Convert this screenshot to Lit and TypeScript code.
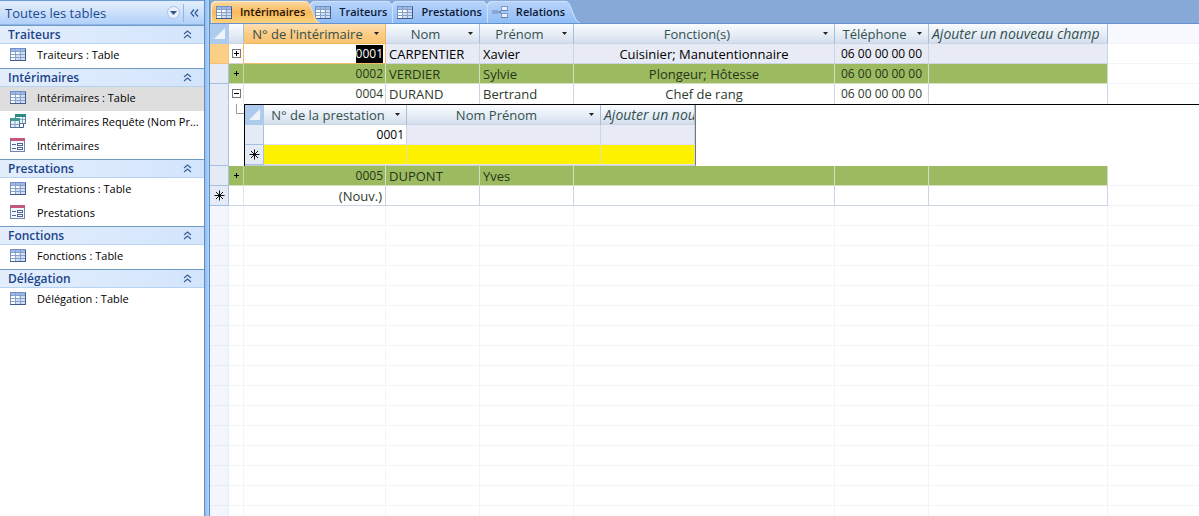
import { LitElement, html, svg, css, nothing } from "lit";
import { customElement, state } from "lit/decorators.js";
import { classMap } from "lit/directives/class-map.js";

type IconName = "table" | "query" | "form" | "relations";

const tableIcon = html`<svg class="icon" width="16" height="13" viewBox="0 0 16 13" aria-hidden="true">
  <rect x="0.5" y="0.5" width="15" height="12" fill="#fdfeff" stroke="#7390c4" />
  <rect x="1" y="1" width="14" height="2" fill="#9db9ea" />
  <path d="M5 7H9V10H15V12H5Z M9 4H15V10H9Z" fill="#cfdff6" />
  <path d="M1 3.5H15M1 6.5H15M1 9.5H15M5.5 1V12M10.5 1V12" stroke="#8ba2c8" fill="none" />
  <path d="M0 12.5H16M15.5 1V13" stroke="#425a8e" fill="none" />
</svg>`;

const queryIcon = html`<svg class="icon" width="16" height="15" viewBox="0 0 16 15" aria-hidden="true">
  <rect x="5.5" y="0.5" width="10" height="9" fill="#eef5fa" stroke="#55809b" />
  <rect x="5" y="0" width="11" height="3" fill="#2f8a86" />
  <path d="M6 5.5H15M12.5 3V9" stroke="#8aa6c0" />
  <rect x="0.5" y="4.5" width="9" height="9" fill="#e3ecf8" stroke="#55709b" />
  <rect x="0" y="4" width="10" height="3" fill="#3f9a94" />
  <path d="M1 10.5H9M5 7V13" stroke="#8aa6c0" />
  <path d="M10 13.5H13.5V10" stroke="#3b5a8c" fill="none" />
</svg>`;

const formIcon = html`<svg class="icon" width="15" height="14" viewBox="0 0 15 14" aria-hidden="true">
  <rect x="0.5" y="0.5" width="14" height="13" fill="#f3f6fc" stroke="#7186ae" />
  <rect x="0" y="0" width="15" height="3" fill="#c2577f" />
  <path d="M2 6.5H6M2 10.5H6" stroke="#4f6593" />
  <rect x="7.5" y="5.5" width="5" height="2" fill="#fff" stroke="#4f6593" />
  <rect x="7.5" y="9.5" width="5" height="2" fill="#fff" stroke="#4f6593" />
</svg>`;

const relationsIcon = html`<svg class="icon" width="16" height="14" viewBox="0 0 16 14" aria-hidden="true">
  <path d="M5 7H8M8 7L11 3.5M8 7L11 11" stroke="#5f7294" fill="none" />
  <rect x="0.5" y="5.5" width="5" height="3" fill="#8ba6d2" stroke="#8ba6d2" />
  <rect x="9.5" y="1.5" width="6" height="4" fill="#e6eefb" stroke="#8199c4" />
  <rect x="9.5" y="8.5" width="6" height="4" fill="#e6eefb" stroke="#8199c4" />
  <path d="M9 5.5H16M9 12.5H16" stroke="#5f7fb8" />
</svg>`;

const icons: Record<IconName, unknown> = {
  table: tableIcon,
  query: queryIcon,
  form: formIcon,
  relations: relationsIcon,
};

const newRecord = html`<svg class="glyph" width="11" height="11" viewBox="0 0 11 11" role="img" aria-label="Nouvel enregistrement">
  <path d="M5.5 0.5V10.5M0.5 5.5H10.5M2 2L9 9M9 2L2 9" stroke="#111" fill="none" />
</svg>`;

const corner = html`<svg class="glyph" width="11" height="11" viewBox="0 0 11 11" aria-hidden="true">
  <path d="M11 0V11H0Z" fill="#eef3fa" />
</svg>`;

const arrow = (label: string) => html`<button class="arrow" aria-label="Filtrer ${label}">
  <svg width="5" height="3" viewBox="0 0 5 3" aria-hidden="true"><path d="M0 0H5L2.5 3Z" fill="#222" /></svg>
</button>`;

interface Group {
  title: string;
  items: { icon: IconName; text: string; selected?: boolean }[];
}

const groups: Group[] = [
  { title: "Traiteurs", items: [{ icon: "table", text: "Traiteurs : Table" }] },
  {
    title: "Intérimaires",
    items: [
      { icon: "table", text: "Intérimaires : Table", selected: true },
      { icon: "query", text: "Intérimaires Requête (Nom Pr..." },
      { icon: "form", text: "Intérimaires" },
    ],
  },
  {
    title: "Prestations",
    items: [
      { icon: "table", text: "Prestations : Table" },
      { icon: "form", text: "Prestations" },
    ],
  },
  { title: "Fonctions", items: [{ icon: "table", text: "Fonctions : Table" }] },
  { title: "Délégation", items: [{ icon: "table", text: "Délégation : Table" }] },
];

@customElement("nav-pane")
export class NavPane extends LitElement {
  @state() private closed = new Set<string>();

  static styles = css`
    :host {
      display: block;
      background: #fff;
      font: 12px/18px "Open Sans", sans-serif;
      color: #000;
    }
    header {
      display: flex;
      align-items: center;
      box-sizing: border-box;
      height: 25px;
      padding-left: 5px;
      border-top: 1px solid #6b9bd8;
      border-bottom: 1px solid #8fb4e6;
      background: linear-gradient(#e2eefd, #cfe2fb 45%, #b0d0fa);
    }
    h1 {
      flex: 1;
      margin: 0;
      font-size: 13px;
      font-weight: 400;
      color: #21498f;
    }
    button {
      border: 0;
      padding: 0;
      background: none;
      font: inherit;
      color: inherit;
    }
    .menu,
    .collapse {
      display: flex;
      align-items: center;
      justify-content: center;
      height: 18px;
      width: 20px;
    }
    .menu {
      border-right: 1px solid #93b5e2;
    }
    h2 {
      margin: 0;
      font-size: 12px;
    }
    .group {
      display: flex;
      align-items: center;
      justify-content: space-between;
      box-sizing: border-box;
      width: 100%;
      height: 19px;
      padding: 0 12px 0 8px;
      border-top: 1px solid #6f9bc4;
      border-bottom: 1px solid #b7d3f3;
      background: linear-gradient(90deg, #e3eefd, #d3e5fc);
      font-weight: 600;
      color: #1b4488;
    }
    ul {
      margin: 0;
      padding: 0;
      list-style: none;
    }
    a {
      display: flex;
      align-items: center;
      box-sizing: border-box;
      height: 24px;
      padding: 0 0 2px 10px;
      color: inherit;
      text-decoration: none;
      white-space: nowrap;
      font-size: 11px;
    }
    .selected {
      background: #dedede;
    }
    .slot {
      display: flex;
      width: 27px;
      padding-bottom: 2px;
    }
  `;

  private toggle(title: string) {
    const next = new Set(this.closed);
    next.has(title) ? next.delete(title) : next.add(title);
    this.closed = next;
  }

  render() {
    return html`
      <header>
        <h1>Toutes les tables</h1>
        <button class="menu" aria-label="Choisir une catégorie">
          <svg width="13" height="13" viewBox="0 0 13 13" aria-hidden="true">
            <circle cx="6.5" cy="6.5" r="6" fill="#e6effb" stroke="#a9c2e4" />
            <path d="M3 5H10L6.5 9Z" fill="#33548c" />
          </svg>
        </button>
        <button class="collapse" aria-label="Réduire le volet">
          <svg width="9" height="8" viewBox="0 0 9 8" aria-hidden="true">
            <path d="M4 0.5L1 4L4 7.5M8 0.5L5 4L8 7.5" fill="none" stroke="#2e579d" stroke-width="1.2" />
          </svg>
        </button>
      </header>
      <nav>
        ${groups.map(
          (g) => html`
            <h2>
              <button class="group" @click=${() => this.toggle(g.title)}>
                ${g.title}
                <svg width="9" height="9" viewBox="0 0 9 9" aria-hidden="true">
                  <path d="M1 4L4.5 1L8 4M1 8L4.5 5L8 8" fill="none" stroke="#3c5f99" stroke-width="1.2" />
                </svg>
              </button>
            </h2>
            ${this.closed.has(g.title)
              ? nothing
              : html`<ul>
                  ${g.items.map(
                    (i) => html`<li>
                      <a href="#" class=${classMap({ selected: !!i.selected })}
                        ><span class="slot">${icons[i.icon]}</span>${i.text}</a
                      >
                    </li>`
                  )}
                </ul>`}
          `
        )}
      </nav>
    `;
  }
}

const tabs: { icon: IconName; text: string }[] = [
  { icon: "table", text: "Intérimaires" },
  { icon: "table", text: "Traiteurs" },
  { icon: "table", text: "Prestations" },
  { icon: "relations", text: "Relations" },
];

@customElement("document-tabs")
export class DocumentTabs extends LitElement {
  @state() private active = 0;

  static styles = css`
    :host {
      display: flex;
      box-sizing: border-box;
      height: 24px;
      padding: 1px 0 0 1px;
      background: #87a9d7;
      border-bottom: 1px solid #6592cc;
      font: 600 11px/22px "Open Sans", sans-serif;
      color: #0c1a38;
    }
    button {
      display: flex;
      position: relative;
      margin: 0 -10px 0 0;
      border: 0;
      padding: 0;
      background: none;
      font: inherit;
      color: inherit;
    }
    .body {
      display: flex;
      align-items: center;
      gap: 8px;
      height: 22px;
      padding-left: 5px;
      border-radius: 5px 0 0 0;
      background: linear-gradient(#b9d4fa, #a4c8f8 50%, #8fbdf6);
      box-shadow: inset 1px 1px #cfe1fa;
    }
    .cap {
      display: block;
    }
    .active {
      z-index: 1;
      color: #1f1403;
    }
    .active .body {
      background: linear-gradient(#fcdca6, #f9b95c 50%, #fcd27b);
      box-shadow: inset 1px 1px #fde9c4;
    }
  `;

  render() {
    return tabs.map((t, n) => {
      const on = n === this.active;
      const stops = on ? ["#fcdca6", "#f9b95c", "#fcd27b"] : ["#b9d4fa", "#a4c8f8", "#8fbdf6"];
      return html`<button class=${classMap({ active: on })} @click=${() => (this.active = n)}>
        <span class="body">${icons[t.icon]}${t.text}</span>
        <svg class="cap" width="15" height="22" viewBox="0 0 15 22" aria-hidden="true">
          <defs>
            ${svg`<linearGradient id=${"cap" + n} x1="0" y1="0" x2="0" y2="1">
              <stop offset="0" stop-color=${stops[0]} /><stop offset="0.5" stop-color=${stops[1]} /><stop offset="1" stop-color=${stops[2]} />
            </linearGradient>`}
          </defs>
          <path d="M0 0C3 0 4 2 6 7L10 17Q12 22 15 22H0Z" fill=${`url(#cap${n})`} />
          <path d="M0 0.5C3 0.5 4 2 6 7L10 17Q12 21.5 15 22" fill="none" stroke=${on ? "#fbe3b5" : "#d3e4fa"} />
        </svg>
      </button>`;
    });
  }
}

interface Row {
  id: string;
  nom: string;
  prenom: string;
  fonctions: string;
  tel: string;
  tone?: "current" | "green";
  open?: boolean;
}

const rows: Row[] = [
  { id: "0001", nom: "CARPENTIER", prenom: "Xavier", fonctions: "Cuisinier; Manutentionnaire", tel: "06 00 00 00 00", tone: "current" },
  { id: "0002", nom: "VERDIER", prenom: "Sylvie", fonctions: "Plongeur; Hôtesse", tel: "06 00 00 00 00", tone: "green" },
  { id: "0004", nom: "DURAND", prenom: "Bertrand", fonctions: "Chef de rang", tel: "06 00 00 00 00", open: true },
  { id: "0005", nom: "DUPONT", prenom: "Yves", fonctions: "", tel: "", tone: "green" },
];

@customElement("data-sheet")
export class DataSheet extends LitElement {
  static styles = css`
    :host {
      display: flex;
      flex-direction: column;
      min-height: 0;
      overflow: hidden;
      background: #fff;
      font: 13px/18px "Open Sans", sans-serif;
      color: #2c3a2c;
    }
    table {
      width: 100%;
      table-layout: fixed;
      border-collapse: separate;
      border-spacing: 0;
    }
    .c-sel { width: 19px; }
    .c-exp { width: 15px; }
    .c-id { width: 142px; }
    .c-name { width: 94px; }
    .c-fn { width: 261px; }
    .c-add { width: 179px; }
    .s-id { width: 143px; }
    .s-name { width: 194px; }
    .s-add { width: 94px; }

    th,
    td {
      box-sizing: border-box;
      height: 20px;
      padding: 1px 3px 0;
      border-right: 1px solid #ccd5e3;
      border-bottom: 1px solid #ccd5e3;
      text-align: left;
      font-weight: 400;
      white-space: nowrap;
      overflow: hidden;
    }
    thead th {
      padding: 0;
      border-right-color: #a9bfd6;
      background: linear-gradient(#fafcfe, #e6edf6 55%, #d3deec);
      color: #34504f;
    }
    .head {
      display: flex;
      align-items: center;
      height: 19px;
    }
    .head span {
      flex: 1;
      padding-top: 1px;
      text-align: center;
    }
    .arrow {
      display: flex;
      width: 14px;
      height: 19px;
      align-items: center;
      justify-content: center;
      border: 0;
      padding: 0 4px 0 0;
      background: none;
    }
    thead .add {
      padding-left: 3px;
      font-size: 14px;
      font-style: italic;
    }
    thead .hot {
      border-right-color: #f2b45d;
      border-bottom-color: #f2b45d;
      background: linear-gradient(#fce0b4, #fbcb85 55%, #f9c372);
    }
    thead .all {
      background: #aecbee;
      border-color: #aecbee;
    }
    .rest,
    thead .rest {
      border-right: 0;
      border-bottom-color: #f3f4f8;
      background: #fff;
    }
    thead .rest {
      background: #f7f9fe;
    }
    .sel {
      padding: 0;
      background: #e4eaf6;
      border-color: #a6c0e3;
      text-align: center;
    }
    .glyph {
      display: block;
      margin: auto;
    }
    .exp {
      padding: 0;
      border-right-color: #dfe5ee;
    }
    .exp button {
      display: block;
      margin: auto;
      border: 0;
      padding: 0;
      background: none;
    }
    .exp svg {
      display: block;
    }
    .num,
    .new {
      text-align: right;
    }
    .num {
      padding-right: 2px;
    }
    .num,
    .tel {
      font-size: 12px;
    }
    .mid,
    .tel {
      text-align: center;
    }
    .current td {
      background: #e8ebf5;
      color: #000;
    }
    .current .sel {
      background: #fccf87;
      border-color: #f6c078;
    }
    .current .exp {
      background: #fff;
      border-right-color: #f3bb6a;
    }
    .current .num {
      background: #fff;
      border-color: #f3bb6a;
    }
    .current td.rest {
      background: #fff;
    }
    mark {
      display: inline-block;
      background: #000;
      color: #fff;
    }
    .green td {
      background: #9cbb60;
      border-color: #d3dfc4;
      color: #26351a;
    }
    .green td.sel {
      background: #e4eaf6;
      border-color: #a6c0e3;
    }
    .green td.exp {
      border-color: #9cbb60 #c5d4ae #d3dfc4;
    }
    .green td.rest {
      background: #fff;
      border-bottom-color: #f3f4f8;
    }
    .open td {
      border-bottom-color: #fff;
    }
    .open .sel {
      border-bottom-color: #e4eaf6;
    }
    .branch {
      padding: 0;
      border: 0;
      vertical-align: top;
    }
    .branch svg {
      display: block;
    }
    .nest {
      padding: 0;
      border: 0;
      border-top: 1px solid #000;
      border-left: 1px solid #000;
    }
    .sub {
      width: 450px;
      border-right: 1px solid #777;
      border-bottom: 1px solid #c9cdd6;
      box-sizing: content-box;
    }
    .sub td {
      border-bottom-color: #dfe3ee;
    }
    .sub .shade {
      background: #e8ebf5;
    }
    .sub .sel {
      border-bottom-color: #a6c0e3;
    }
    .sub .fresh td:not(.sel) {
      background: #fff200;
      border-right-color: #e3e0a0;
    }
    .dark {
      color: #000;
    }
    .filler {
      flex: 1;
      display: grid;
      grid-template-columns: 19px 15px 142px 94px 94px 261px 94px 179px 1fr;
      background: repeating-linear-gradient(transparent 0 19px, #f3f4f7 19px 20px);
    }
    .filler i {
      border-right: 1px solid #f5f5f8;
    }
    .filler i:first-child {
      background: repeating-linear-gradient(#f4f6fd 0 19px, #e6eaf5 19px 20px);
      border-color: #e9ecf6;
    }
    .filler i:last-child {
      border: 0;
    }
  `;

  private head(label: string, cls = "") {
    return html`<th scope="col" class=${cls}>
      <div class="head"><span>${label}</span>${arrow(label)}</div>
    </th>`;
  }

  private expander(r: Row) {
    const green = r.tone === "green";
    return html`<button aria-label=${(r.open ? "Réduire " : "Développer ") + r.id}>
      <svg width="9" height="9" viewBox="0 0 9 9" aria-hidden="true">
        ${green ? nothing : svg`<rect x="0.5" y="0.5" width="8" height="8" fill="#fff" stroke="#777" />`}
        <path d=${r.open ? "M2 4.5H7" : "M2 4.5H7M4.5 2V7"} stroke="#000" fill="none" />
      </svg>
    </button>`;
  }

  private detail() {
    return html`<tr class="detail">
      <td class="sel"></td>
      <td class="branch">
        <svg width="15" height="12" viewBox="0 0 15 12" aria-hidden="true">
          <path d="M7.5 0V9.5H15" fill="none" stroke="#999" />
        </svg>
      </td>
      <td class="nest" colspan="7">
        <table class="sub">
          <colgroup><col class="c-sel" /><col class="s-id" /><col class="s-name" /><col class="s-add" /></colgroup>
          <thead>
            <tr>
              <th class="all">${corner}</th>
              ${this.head("N° de la prestation")} ${this.head("Nom Prénom")}
              <th scope="col" class="add">Ajouter un nouveau champ</th>
            </tr>
          </thead>
          <tbody>
            <tr>
              <td class="sel"></td>
              <td class="num dark">0001</td>
              <td class="shade"></td>
              <td class="shade"></td>
            </tr>
            <tr class="fresh">
              <td class="sel">${newRecord}</td>
              <td></td>
              <td></td>
              <td></td>
            </tr>
          </tbody>
        </table>
      </td>
    </tr>`;
  }

  render() {
    return html`
      <table>
        <colgroup>
          <col class="c-sel" /><col class="c-exp" /><col class="c-id" /><col class="c-name" /><col class="c-name" /><col
            class="c-fn"
          /><col class="c-name" /><col class="c-add" /><col />
        </colgroup>
        <thead>
          <tr>
            <th class="all">${corner}</th>
            <th></th>
            ${this.head("N° de l'intérimaire", "hot")} ${this.head("Nom")} ${this.head("Prénom")}
            ${this.head("Fonction(s)")} ${this.head("Téléphone")}
            <th scope="col" class="add">Ajouter un nouveau champ</th>
            <th class="rest"></th>
          </tr>
        </thead>
        <tbody>
          ${rows.map(
            (r) => html`
              <tr class=${classMap({ current: r.tone === "current", green: r.tone === "green", open: !!r.open })}>
                <td class="sel"></td>
                <td class="exp">${this.expander(r)}</td>
                <td class="num">${r.tone === "current" ? html`<mark>${r.id}</mark>` : r.id}</td>
                <td>${r.nom}</td>
                <td>${r.prenom}</td>
                <td class="mid">${r.fonctions}</td>
                <td class="tel">${r.tel}</td>
                <td></td>
                <td class="rest"></td>
              </tr>
              ${r.open ? this.detail() : nothing}
            `
          )}
          <tr>
            <td class="sel">${newRecord}</td>
            <td class="exp"></td>
            <td class="new">(Nouv.)</td>
            <td></td>
            <td></td>
            <td></td>
            <td></td>
            <td></td>
            <td class="rest"></td>
          </tr>
        </tbody>
      </table>
      <div class="filler">${Array.from({ length: 9 }, () => html`<i></i>`)}</div>
    `;
  }
}

@customElement("app-root")
export class AppRoot extends LitElement {
  static styles = css`
    :host {
      display: grid;
      grid-template-columns: 204px 6px 1fr;
      height: 100vh;
      overflow: hidden;
    }
    .splitter {
      box-sizing: border-box;
      border-left: 1px solid #5f8fcb;
      border-right: 1px solid #5f8fb5;
      background: linear-gradient(90deg, #8fbbf0, #b4d6fb);
    }
    main {
      display: flex;
      flex-direction: column;
      min-width: 0;
      min-height: 0;
    }
    data-sheet {
      flex: 1;
    }
  `;

  render() {
    return html`
      <nav-pane></nav-pane>
      <div class="splitter"></div>
      <main>
        <document-tabs></document-tabs>
        <data-sheet></data-sheet>
      </main>
    `;
  }
}
